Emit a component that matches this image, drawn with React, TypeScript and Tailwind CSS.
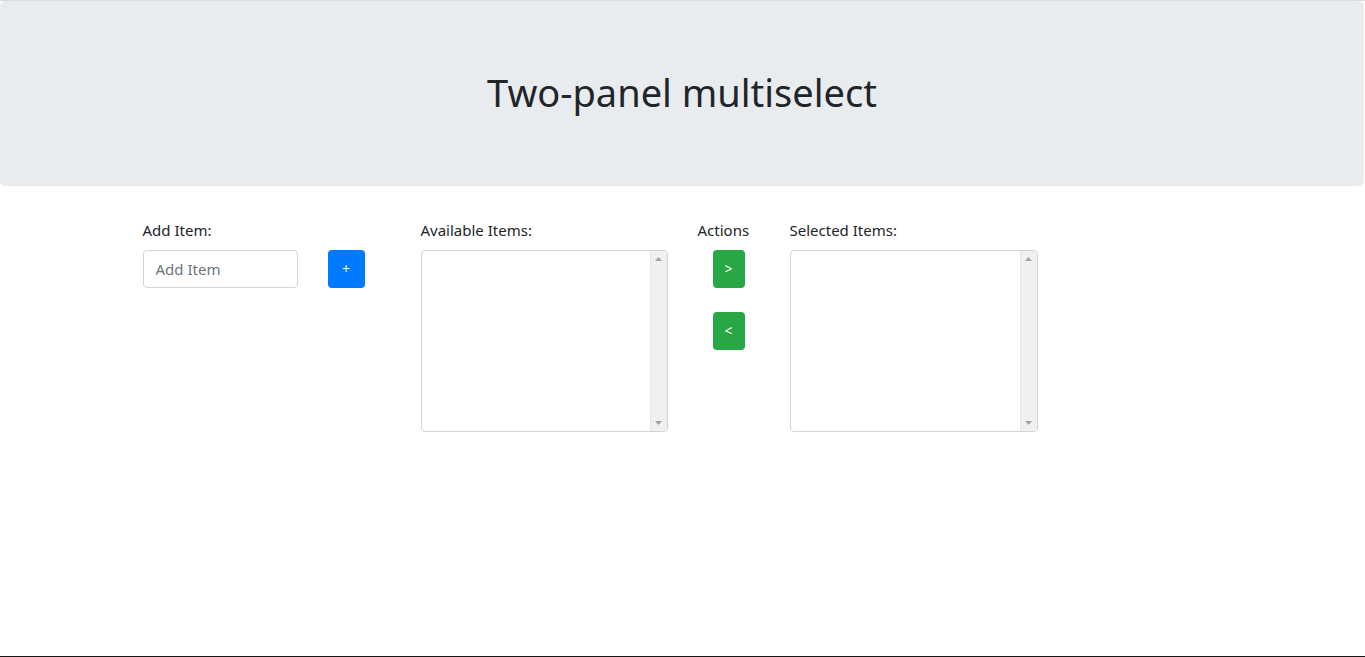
import React from "react";

function ListBox() {
  return (
    <div className="flex h-[182px] w-full rounded-[4px] border border-[#ced4da] bg-white overflow-hidden">
      <div className="flex-1" />
      <div className="flex w-[17px] flex-col items-center justify-between bg-[#f0f0f0] py-[6px] border-l border-[#e6e6e6]">
        <svg width="7" height="4" viewBox="0 0 7 4"><polygon points="3.5,0 7,4 0,4" fill="#a3a3a3" /></svg>
        <svg width="7" height="4" viewBox="0 0 7 4"><polygon points="0,0 7,0 3.5,4" fill="#a3a3a3" /></svg>
      </div>
    </div>
  );
}

export default function App() {
  const font = { fontFamily: '"Segoe UI", "Noto Sans", "Open Sans", sans-serif' };
  return (
    <div className="flex h-[657px] w-full flex-col bg-white text-[#212529] text-[15px] leading-[24px]" style={font}>
      <div className="h-px w-full bg-[#dcdcdc]" />
      <div className="w-[1364px] rounded-[5px] bg-[#e9ecef] px-8 pt-[67px] pb-[62px]">
        <h1 className="mb-2 text-center text-[38px] leading-[48px] font-normal">Two-panel multiselect</h1>
      </div>
      <div className="mx-auto mt-[32px] w-[1140px] px-[30px]">
        <div className="flex items-start">
          <div className="flex flex-col">
            <label className="mb-2">Add Item:</label>
            <div className="flex">
              <input
                placeholder="Add Item"
                className="h-[38px] w-[155px] rounded-[4px] border border-[#ced4da] px-3 text-[15px] placeholder:text-[#6c757d] outline-none"
                style={font}
              />
              <button className="ml-[30px] flex h-[38px] w-[37px] items-center justify-center rounded-[4px] bg-[#007bff] text-[14px] text-white">+</button>
            </div>
          </div>
          <div className="ml-[56px] flex w-[247px] flex-col">
            <label className="mb-2">Available Items:</label>
            <ListBox />
          </div>
          <div className="ml-[30px] flex w-[92px] flex-col">
            <label className="mb-2">Actions</label>
            <button className="ml-[15px] flex h-[38px] w-[32px] items-center justify-center rounded-[4px] bg-[#28a745] text-[14px] text-white">&gt;</button>
            <button className="ml-[15px] mt-[24px] flex h-[38px] w-[32px] items-center justify-center rounded-[4px] bg-[#28a745] text-[14px] text-white">&lt;</button>
          </div>
          <div className="flex w-[248px] flex-col">
            <label className="mb-2">Selected Items:</label>
            <ListBox />
          </div>
        </div>
      </div>
      <div className="flex-1" />
      <div className="h-px w-full bg-[#161616]" />
    </div>
  );
}
